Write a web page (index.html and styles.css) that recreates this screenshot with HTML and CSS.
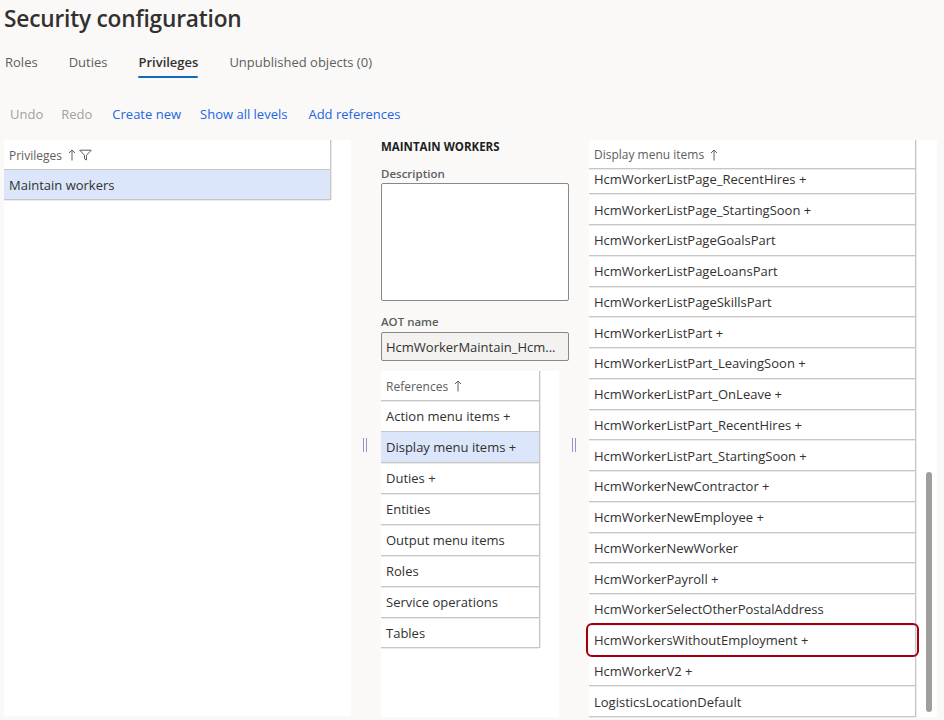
FILE: index.html
```html
<!DOCTYPE html>
<html>
<head>
<meta charset="utf-8">
<link rel="stylesheet" href="styles.css">
</head>
<body>
<h1 class="title">Security configuration</h1>
<nav class="tabs">
  <span class="tab">Roles</span>
  <span class="tab">Duties</span>
  <span class="tab active">Privileges</span>
  <span class="tab">Unpublished objects (0)</span>
</nav>
<div class="toolbar">
  <span class="tb disabled">Undo</span>
  <span class="tb disabled">Redo</span>
  <span class="tb link">Create new</span>
  <span class="tb link">Show all levels</span>
  <span class="tb link">Add references</span>
</div>
<main class="main">
  <section class="panel left-panel">
    <div class="grid priv-grid">
      <div class="ghead">Privileges
        <svg class="arrow" width="8" height="12" viewBox="0 0 8 12"><path d="M4 11.5V1M1 4L4 1L7 4" fill="none" stroke="#605e5c" stroke-width="1"/></svg>
        <svg class="funnel" width="13" height="12" viewBox="0 0 13 12"><path d="M0.8 1.2H12.2L7.5 6.3V11L5.5 9.8V6.3Z" fill="none" stroke="#605e5c" stroke-width="1" stroke-linejoin="round"/></svg>
      </div>
      <div class="grow selected">Maintain workers</div>
    </div>
  </section>
  <div class="splitter split-left"><span class="handle"></span></div>
  <section class="middle">
    <div class="mtitle">MAINTAIN WORKERS</div>
    <div class="flabel">Description</div>
    <div class="textarea"></div>
    <div class="flabel aot">AOT name</div>
    <div class="input">HcmWorkerMaintain_Hcm...</div>
    <div class="panel refs-panel">
      <div class="grid refs-grid">
        <div class="ghead">References
          <svg class="arrow" width="8" height="12" viewBox="0 0 8 12"><path d="M4 11.5V1M1 4L4 1L7 4" fill="none" stroke="#605e5c" stroke-width="1"/></svg>
        </div>
        <div class="grow">Action menu items +</div>
        <div class="grow selected">Display menu items +</div>
        <div class="grow">Duties +</div>
        <div class="grow">Entities</div>
        <div class="grow">Output menu items</div>
        <div class="grow">Roles</div>
        <div class="grow">Service operations</div>
        <div class="grow">Tables</div>
      </div>
    </div>
  </section>
  <div class="splitter split-right"><span class="handle"></span></div>
  <section class="panel right-panel">
    <div class="grid items-grid">
      <div class="ghead">Display menu items
        <svg class="arrow" width="8" height="12" viewBox="0 0 8 12"><path d="M4 11.5V1M1 4L4 1L7 4" fill="none" stroke="#605e5c" stroke-width="1"/></svg>
      </div>
      <div class="gbody">
        <div class="irow partial">HcmWorkerListPage_RecentHires +</div>
        <div class="irow">HcmWorkerListPage_StartingSoon +</div>
        <div class="irow">HcmWorkerListPageGoalsPart</div>
        <div class="irow">HcmWorkerListPageLoansPart</div>
        <div class="irow">HcmWorkerListPageSkillsPart</div>
        <div class="irow">HcmWorkerListPart +</div>
        <div class="irow">HcmWorkerListPart_LeavingSoon +</div>
        <div class="irow">HcmWorkerListPart_OnLeave +</div>
        <div class="irow">HcmWorkerListPart_RecentHires +</div>
        <div class="irow">HcmWorkerListPart_StartingSoon +</div>
        <div class="irow">HcmWorkerNewContractor +</div>
        <div class="irow">HcmWorkerNewEmployee +</div>
        <div class="irow">HcmWorkerNewWorker</div>
        <div class="irow">HcmWorkerPayroll +</div>
        <div class="irow">HcmWorkerSelectOtherPostalAddress</div>
        <div class="irow highlight">HcmWorkersWithoutEmployment +<span class="outline"></span></div>
        <div class="irow">HcmWorkerV2 +</div>
        <div class="irow">LogisticsLocationDefault</div>
      </div>
    </div>
    <div class="scrolltrack"><span class="thumb"></span></div>
  </section>
</main>
</body>
</html>
```
FILE: styles.css
```css
* { box-sizing: border-box; }
html, body { margin: 0; padding: 0; }
body {
  background: #faf9f8;
  font-family: "Open Sans", "Noto Sans", sans-serif;
  color: #323130;
  width: 944px;
  height: 720px;
  overflow: hidden;
}
.title {
  margin: 0;
  padding: 3px 0 0 4px;
  font-size: 22.7px;
  font-weight: 600;
  line-height: 32px;
  height: 42px;
  letter-spacing: -0.2px;
}
.tabs {
  display: flex;
  height: 38px;
  padding-left: 5px;
  align-items: flex-start;
}
.tab {
  font-size: 13px;
  color: #605e5c;
  line-height: 20px;
  padding-top: 10px;
  position: relative;
}
.tab:nth-child(1) { margin-right: 31px; }
.tab:nth-child(2) { margin-right: 31px; }
.tab:nth-child(3) { margin-right: 31px; }
.tab.active { color: #323130; font-weight: 600; }
.tab.active::after {
  content: "";
  position: absolute;
  left: 0; right: 0;
  top: 34px;
  height: 2px;
  background: #0f6cbd;
  border-radius: 1px;
}
.toolbar {
  display: flex;
  height: 60px;
  padding: 24px 0 0 10px;
}
.tb {
  font-size: 13px;
  line-height: 20px;
  margin-right: 19px;
}
.tb:nth-child(1) { margin-right: 18px; }
.tb:nth-child(2) { margin-right: 20px; }
.tb:nth-child(4) { margin-right: 21px; }
.tb.disabled { color: #a19f9d; }
.tb.link { color: #2266e3; }
.main {
  display: flex;
  height: 577px;
}
.panel { background: #fff; }
.left-panel {
  margin-left: 4px;
  width: 347px;
  height: 576px;
}
.grid {
  border-right: 1px solid #c8c6c4;
  box-shadow: 1px 0 0 #ecebea;
}
.priv-grid { width: 327px; }
.ghead {
  height: 30px;
  display: flex;
  align-items: center;
  padding-left: 5px;
  padding-top: 1px;
  font-size: 12px;
  color: #605e5c;
  border-bottom: 1px solid #c8c6c4;
  box-shadow: 0 1px 0 #ecebea;
}
.ghead .arrow { margin-left: 6px; }
.ghead .funnel { margin-left: 3px; }
.grow {
  height: 31px;
  display: flex;
  align-items: center;
  padding-left: 5px;
  font-size: 13px;
  border-bottom: 1px solid #c8c6c4;
  box-shadow: 0 1px 0 #ecebea;
  white-space: nowrap;
}
.priv-grid .grow { height: 30px; padding-top: 1px; }
.grow.selected { background: #dbe6fb; }
.splitter { position: relative; }
.split-left { width: 30px; }
.split-right { width: 20px; }
.handle {
  position: absolute;
  top: 298px;
  width: 4px;
  height: 14px;
  border-left: 1px solid #9d8fc8;
  border-right: 1px solid #9d8fc8;
}
.split-left .handle { left: 12px; }
.split-right .handle { left: 3px; }
.middle {
  width: 188px;
  display: flex;
  flex-direction: column;
}
.mtitle {
  font-size: 11.5px;
  font-weight: 700;
  line-height: 14px;
  color: #201f1e;
  height: 27px;
}
.flabel {
  font-size: 11.5px;
  font-weight: 600;
  color: #605e5c;
  line-height: 14px;
  height: 16px;
}
.textarea {
  height: 118px;
  border: 1px solid #8a8886;
  border-radius: 2px;
  background: #fff;
}
.flabel.aot { margin-top: 14px; height: 17px; }
.input {
  height: 29px;
  border: 1px solid #8a8886;
  border-radius: 2px;
  background: #f3f2f1;
  font-size: 13px;
  display: flex;
  align-items: center;
  padding-left: 4px;
  white-space: nowrap;
  overflow: hidden;
}
.refs-panel {
  margin-top: 10px;
  width: 178px;
  height: 346px;
}
.refs-grid { width: 159px; }
.refs-grid .grow:last-child { height: 30px; }
.right-panel {
  width: 348px;
  height: 577px;
  display: flex;
}
.items-grid {
  width: 327px;
  display: flex;
  flex-direction: column;
}
.gbody { flex: 1; }
.irow {
  height: 30.75px;
  display: flex;
  align-items: center;
  padding-left: 5px;
  padding-top: 1px;
  font-size: 13px;
  border-bottom: 1px solid #c8c6c4;
  box-shadow: 0 1px 0 #ecebea;
  white-space: nowrap;
  position: relative;
}
.irow.partial {
  height: 25px;
  padding-top: 0;
  padding-bottom: 5px;
}
.outline {
  position: absolute;
  left: -3px;
  right: -4px;
  top: -2px;
  bottom: -2px;
  border: 2px solid #a4000c;
  border-radius: 6px;
}
.scrolltrack {
  width: 21px;
  position: relative;
}
.thumb {
  position: absolute;
  left: 10px;
  top: 332px;
  width: 6px;
  height: 240px;
  border-radius: 3px;
  background: #a19f9d;
}
```
